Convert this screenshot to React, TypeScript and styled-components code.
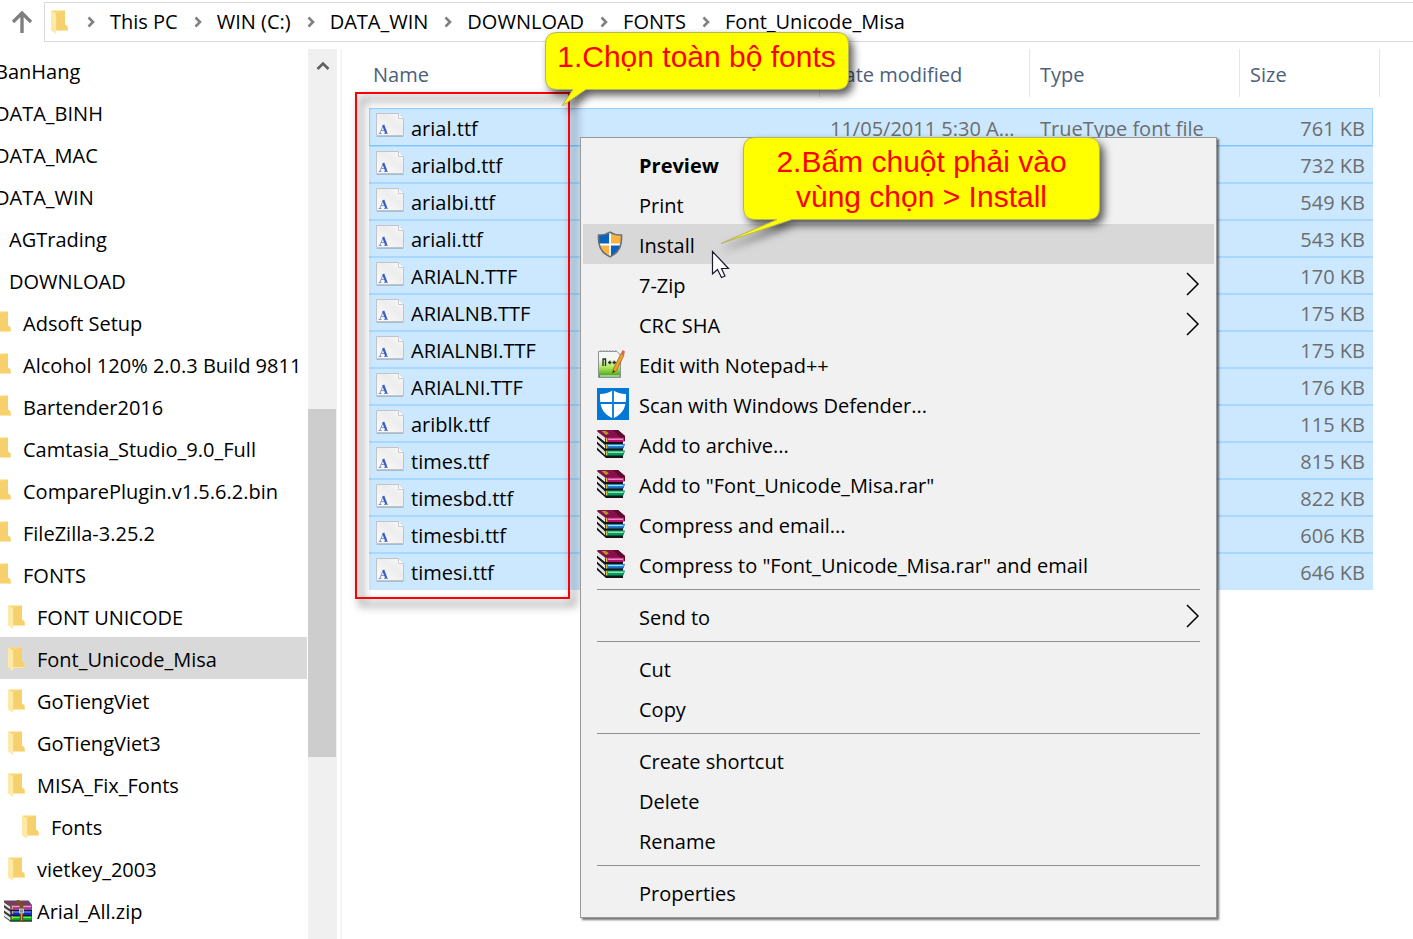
import React from "react";
import styled, { createGlobalStyle, css } from "styled-components";

const GlobalStyle = createGlobalStyle`
  *, *::before, *::after { box-sizing: border-box; }
  body {
    margin: 0;
    background: #fff;
    color: #000;
    font-family: "Open Sans", "Noto Sans", sans-serif;
    font-size: 20px;
    line-height: 28px;
  }
  ul, ol { list-style: none; margin: 0; padding: 0; }
  button { font: inherit; color: inherit; border: 0; background: none; padding: 0; text-align: left; }
  a { color: inherit; text-decoration: none; }
  svg { display: block; flex: none; }
`;

const Window = styled.div`
  position: relative;
  display: flex;
  flex-direction: column;
  min-height: 100vh;
  overflow: hidden;
`;

const AddressRow = styled.header`
  display: flex;
  align-items: center;
  height: 42px;
  padding-top: 1px;
`;

const UpButton = styled.button`
  display: flex;
  justify-content: center;
  width: 44px;
  flex: none;
`;

const AddressBox = styled.nav`
  flex: 1;
  display: flex;
  align-items: center;
  height: 40px;
  padding-left: 6px;
  border: 1px solid #d9d9d9;
  border-right: 0;
`;

const Crumbs = styled.ol`
  display: flex;
  padding-left: 3px;
`;

const Crumb = styled.li`
  display: flex;
  align-items: center;
  white-space: nowrap;
  svg { margin: 0 15px 0 16px; }
`;

const Body = styled.div`
  flex: 1;
  display: flex;
  padding-top: 7px;
`;

const TreePane = styled.nav`
  width: 307px;
  flex: none;
  overflow: hidden;
`;

const TreeItem = styled.li<{ $depth: number; $selected?: boolean }>`
  height: 42px;
  padding-left: ${(p) => p.$depth * 14}px;
  margin-left: -38px;
  background: ${(p) => (p.$selected ? "#d9d9d9" : "transparent")};
`;

const TreeLink = styled.a`
  display: flex;
  align-items: center;
  height: 42px;
  padding-top: 4px;
  white-space: nowrap;
  svg { margin-bottom: 2px; }
`;

const TreeIcon = styled.span<{ $wide?: boolean }>`
  width: 33px;
  flex: none;
  padding-left: ${(p) => (p.$wide ? 0 : 4)}px;
`;

const ScrollTrack = styled.div`
  display: flex;
  flex-direction: column;
  width: 29px;
  flex: none;
  margin-left: 1px;
  background: #f0f0f0;
`;

const ScrollButton = styled.button`
  display: flex;
  align-items: center;
  justify-content: center;
  height: 33px;
`;

const ScrollGap = styled.div<{ $grow: number }>`
  flex: ${(p) => p.$grow} 0 0;
`;

const ScrollThumb = styled.div`
  flex: 348 0 0;
  margin-right: 1px;
  background: #cdcdcd;
`;

const Files = styled.main`
  flex: 1;
  min-width: 0;
  margin-left: 3px;
  padding: 0 40px 0 27px;
  border-left: 2px solid #f5f5f5;
`;

const FileTable = styled.table`
  width: 100%;
  table-layout: fixed;
  border-collapse: separate;
  border-spacing: 0;
`;

const HeadCell = styled.th<{ $width?: number; $first?: boolean; $last?: boolean }>`
  width: ${(p) => (p.$width ? `${p.$width}px` : "auto")};
  height: 59px;
  padding: 0;
  vertical-align: top;
  text-align: left;
  font-weight: 400;
  color: #4c607a;
  > div {
    height: 48px;
    padding: 12px 0 0 ${(p) => (p.$first ? 4 : 10)}px;
    margin-right: ${(p) => (p.$last ? -7 : 0)}px;
    border-right: 1px solid #e5e5e5;
  }
`;

const Cell = styled.td<{ $align?: string }>`
  height: 37px;
  padding: 2px 8px 0 10px;
  line-height: 28px;
  overflow: hidden;
  white-space: nowrap;
  text-overflow: ellipsis;
  text-align: ${(p) => p.$align || "left"};
  color: #6d6d6d;
  background: #cce8ff;
  border: 0 solid #a8d8ff;
  border-width: 1px 0;
`;

const NameCell = styled(Cell)`
  padding: 0 0 0 7px;
  color: #000;
`;

const FileRow = styled.tr<{ $focused?: boolean }>`
  &:last-child td { border-bottom-color: #cce8ff; }
  ${(p) =>
    p.$focused &&
    css`
      td { height: 38px; border-color: #99d1ff; border-bottom-color: #80c4ff; }
      ${Cell}:not(:first-child) { padding-top: 4px; }
      td:first-child { border-left-width: 1px; padding-left: 6px; }
      td:last-child { border-right-width: 1px; padding-right: 7px; }
    `}
`;

const FileName = styled.div`
  display: flex;
  align-items: center;
  gap: 7px;
  span { padding-top: 3px; }
  svg { margin-bottom: 4px; }
`;

const SelectionFrame = styled.div`
  position: absolute;
  left: 355px;
  top: 92px;
  width: 215px;
  height: 507px;
  border: 2px solid #f00;
  filter: drop-shadow(5px 6px 5px rgba(0, 0, 0, 0.85));
  pointer-events: none;
`;

const Menu = styled.div`
  position: absolute;
  left: 580px;
  top: 137px;
  width: 637px;
  padding: 6px 2px 5px;
  background: #f1f1f1;
  border: 1px solid #999;
  box-shadow: 2px 2px 2px rgba(0, 0, 0, 0.55);
`;

const MenuItem = styled.button<{ $bold?: boolean; $active?: boolean }>`
  display: flex;
  align-items: center;
  width: 100%;
  height: 40px;
  padding: 0 14px;
  font-weight: ${(p) => (p.$bold ? 700 : 400)};
  background: ${(p) => (p.$active ? "#d8d8d8" : "transparent")};
`;

const MenuIcon = styled.span`
  width: 42px;
  flex: none;
`;

const MenuLabel = styled.span`
  flex: 1;
  padding-top: 3px;
  white-space: nowrap;
`;

const Separator = styled.hr`
  height: 1px;
  margin: 5px 14px 6px;
  border: 0;
  background: #919191;
`;

const Callout = styled.div<{ $x: number; $y: number; $w: number; $h: number }>`
  position: absolute;
  left: ${(p) => p.$x}px;
  top: ${(p) => p.$y}px;
  width: ${(p) => p.$w}px;
  height: ${(p) => p.$h}px;
  padding-top: 7px;
  text-align: center;
  font-family: "Liberation Sans", Arial, sans-serif;
  font-size: 30px;
  line-height: 35px;
  color: #f00;
  > svg {
    position: absolute;
    left: 0;
    top: 0;
    overflow: visible;
    filter: drop-shadow(4px 5px 4px rgba(0, 0, 0, 0.65));
  }
  > p { position: relative; margin: 0; white-space: nowrap; }
`;

const Pointer = styled.svg`
  position: absolute;
  left: 711px;
  top: 250px;
`;

const FolderIcon = () => (
  <svg width="17" height="24" viewBox="0 0 17 24">
    <path d="M0.5 0.5H14V14.5L16.5 16.5V21H5Z" fill="#f8d775" />
    <path d="M5 3.5L14 0.5V14.5L16.5 16.5V21H5Z" fill="#f5d06c" />
    <path d="M0 0.5L5.2 3.6V24L0 20.6Z" fill="#ffe9a6" />
    <path d="M5 20.5H16.5" stroke="#fbe6ad" />
  </svg>
);

const CrumbArrow = () => (
  <svg width="8" height="12" viewBox="0 0 8 12">
    <path d="M1.5 1.5L6 6L1.5 10.5" fill="none" stroke="#808080" strokeWidth="2.6" />
  </svg>
);

const FontFileIcon = () => (
  <svg width="28" height="24" viewBox="0 0 28 24">
    <defs>
      <linearGradient id="sheet" x1="0" y1="1" x2="1" y2="0">
        <stop offset="0" stopColor="#fdfdfd" />
        <stop offset="0.6" stopColor="#ededed" />
        <stop offset="1" stopColor="#fafafa" />
      </linearGradient>
    </defs>
    <path d="M0.5 0.5H22.5L27.5 5.5V22.5H0.5Z" fill="url(#sheet)" stroke="#c0c4c8" />
    <path d="M22.5 0.5V5.5H27.5" fill="#fff" stroke="#c8ccd0" />
    <path d="M0.5 23.5H27.5" stroke="#a5bdd2" />
    <path d="M2.500 20.5H5.500M8 20.5H12M4 20L7.200 12.5M5.200 17.500H9" fill="none" stroke="#7d97d6" />
    <path d="M7.200 12L10.300 20.2" stroke="#3c60c0" strokeWidth="2.2" />
  </svg>
);

const ShieldIcon = () => (
  <svg width="26" height="27" viewBox="0 0 26 27">
    <defs>
      <clipPath id="uac">
        <path d="M13 1.2C10 3.3 6 4.2 1.5 4C1 14 3 21 13 25.8C23 21 25 14 24.5 4C20 4.2 16 3.3 13 1.2Z" />
      </clipPath>
    </defs>
    <g clipPath="url(#uac)">
      <rect width="13" height="14" fill="#0a63bd" />
      <rect x="13" width="13" height="14" fill="#fdb340" />
      <rect y="14" width="13" height="13" fill="#fdb340" />
      <rect x="13" y="14" width="13" height="13" fill="#0a63bd" />
      <path d="M13 0V27M0 13.5H26" stroke="#fff" strokeWidth="1.8" />
    </g>
    <path
      d="M13 1.2C10 3.3 6 4.2 1.5 4C1 14 3 21 13 25.8C23 21 25 14 24.5 4C20 4.2 16 3.3 13 1.2Z"
      fill="none"
      stroke="#68707a"
      strokeWidth="1.6"
    />
  </svg>
);

const NotepadIcon = () => (
  <svg width="28" height="30" viewBox="0 0 28 30">
    <defs>
      <linearGradient id="npp" x1="0" y1="0" x2="0" y2="1">
        <stop offset="0.3" stopColor="#f4f7f4" />
        <stop offset="0.6" stopColor="#b4e85c" />
        <stop offset="1" stopColor="#2e9c12" />
      </linearGradient>
    </defs>
    <path d="M1.5 2.5H20L23.5 6V28.5H1.5Z" fill="url(#npp)" stroke="#8d9296" />
    <path d="M3 27H22.5" stroke="#f4f4f4" />
    <path d="M3 2H20" stroke="#9aa0a5" strokeWidth="1.500" strokeDasharray="1.5 1.5" />
    <path d="M6 17V9.5M6 10H8.5V17M11 13.5H14.500M12.800 11.8V15.2M15.500 13.5H19M17.200 11.8V15.2" fill="none" stroke="#26332a" strokeWidth="1.4" />
    <path d="M15.5 24L16.5 20L24 4.5L27 6L19.5 21.5Z" fill="#f1a02e" stroke="#9a6416" strokeWidth="0.8" />
    <path d="M24 4.5L25.5 1L28 2.5L27 6Z" fill="#d9645c" />
    <path d="M15.5 24L16.3 21.3L18 22.3Z" fill="#222" />
  </svg>
);

const DefenderIcon = () => (
  <svg width="32" height="32" viewBox="0 0 32 32">
    <rect width="32" height="32" fill="#0078d7" />
    <path d="M16 2C12.5 4.7 8 6 3 6C2.5 18 5 25.5 16 30.5C27 25.5 29.5 18 29 6C24 6 19.5 4.7 16 2Z" fill="#fff" />
    <path d="M16 1V31M2 15H30" stroke="#0078d7" strokeWidth="1.8" />
  </svg>
);

const BooksIcon = () => (
  <svg width="28" height="28" viewBox="0 0 28 28">
    <path d="M0 1L8 8L26 9V28H9L0 20Z" fill="#141414" />
    <path d="M1 0H21L28 6V8H8.5L0 1Z" fill="#86104f" />
    <path d="M21 0L28 6V11L26.500 12V8H24L16 0Z" fill="#5c0a28" />
    <path d="M4.500 1H9L12 3.500L9 5Z" fill="#b0981c" />
    <path d="M0 1.500L8 8V12L0 5.500ZM0 8L8 15V18.500L0 11.500ZM0 14L8 21.500V25L0 17.500Z" fill="#fafafa" />
    <path d="M0 3.500L8 10M0 9.500L8 16.700M0 15.500L8 23" stroke="#bdbdbd" strokeWidth="0.7" />
    <path d="M8.500 7.500H27L26 12H9.500Z" fill="#b01272" />
    <path d="M11 9.200H26" stroke="#f09aca" strokeWidth="1.400" />
    <path d="M8.500 14H28L26.500 18.500H9.500Z" fill="#1670c0" />
    <path d="M11 15.500H26.500" stroke="#a0dafc" strokeWidth="1.400" />
    <path d="M8.500 20.500H28L26.500 25.500H9.500Z" fill="#0b9a5e" />
    <path d="M11 22.200H26.500" stroke="#90efc5" strokeWidth="1.400" />
    <path d="M9.5 8V12M9.5 14.500V18.500M9.5 21V25.5" stroke="#e6c534" strokeWidth="1.500" />
  </svg>
);

const ZipIcon = () => (
  <svg width="28" height="22" viewBox="0 0 28 22">
    <path d="M0 1L7 6V22L0 17Z" fill="#3a3a3a" />
    <path d="M0 0.5H24.5L28 5V7H6.5L0 2Z" fill="#6f4060" />
    <path d="M0 2.5L6.5 7V9.5L0 5ZM0 7.5L6.5 12V15L0 10.5ZM0 13L6.5 17.5V20.5L0 16Z" fill="#e9e9e9" />
    <path d="M6.5 5H28V10.5H6.5Z" fill="#a13b8c" />
    <path d="M8 6.5H27" stroke="#e59ad6" strokeWidth="1.3" />
    <path d="M6.5 10.5H28V16H6.5Z" fill="#1426c8" />
    <path d="M8 12H27" stroke="#5da0f5" strokeWidth="1.2" />
    <path d="M6.5 16H28V21.5H6.5Z" fill="#0ea321" />
    <path d="M8 17.5H27" stroke="#65ef6c" strokeWidth="1.2" />
    <path d="M6.5 10.5H28M6.5 15.5H28M6.5 21H28" stroke="#1d1230" />
    <path d="M8.5 6V20" stroke="#d4b83a" strokeDasharray="3 2" />
    <path d="M13 0.5L17.5 5V21.5" fill="none" stroke="#7a5219" strokeWidth="3.5" />
    <path d="M15.5 9H19.5V13H15.5Z" fill="#8c8c8c" stroke="#e1e1e1" strokeWidth="0.8" />
    <path d="M17.5 13V20" stroke="#d3a544" />
  </svg>
);

const SubmenuArrow = () => (
  <svg width="14" height="24" viewBox="0 0 14 24">
    <path d="M1 1L12 12L1 23" fill="none" stroke="#000" strokeWidth="1.5" />
  </svg>
);

type Node = { name: string; depth: number; kind?: "folder" | "zip"; selected?: boolean };

const tree: Node[] = [
  { name: "BanHang", depth: 0 },
  { name: "DATA_BINH", depth: 0 },
  { name: "DATA_MAC", depth: 0 },
  { name: "DATA_WIN", depth: 0 },
  { name: "AGTrading", depth: 1 },
  { name: "DOWNLOAD", depth: 1 },
  { name: "Adsoft Setup", depth: 2 },
  { name: "Alcohol 120% 2.0.3 Build 9811", depth: 2 },
  { name: "Bartender2016", depth: 2 },
  { name: "Camtasia_Studio_9.0_Full", depth: 2 },
  { name: "ComparePlugin.v1.5.6.2.bin", depth: 2 },
  { name: "FileZilla-3.25.2", depth: 2 },
  { name: "FONTS", depth: 2 },
  { name: "FONT UNICODE", depth: 3 },
  { name: "Font_Unicode_Misa", depth: 3, selected: true },
  { name: "GoTiengViet", depth: 3 },
  { name: "GoTiengViet3", depth: 3 },
  { name: "MISA_Fix_Fonts", depth: 3 },
  { name: "Fonts", depth: 4 },
  { name: "vietkey_2003", depth: 3 },
  { name: "Arial_All.zip", depth: 3, kind: "zip" },
];

const crumbs = ["This PC", "WIN (C:)", "DATA_WIN", "DOWNLOAD", "FONTS", "Font_Unicode_Misa"];

const files: { name: string; size: string; date?: string; type?: string }[] = [
  { name: "arial.ttf", size: "761 KB", date: "11/05/2011 5:30 A...", type: "TrueType font file" },
  { name: "arialbd.ttf", size: "732 KB" },
  { name: "arialbi.ttf", size: "549 KB" },
  { name: "ariali.ttf", size: "543 KB" },
  { name: "ARIALN.TTF", size: "170 KB" },
  { name: "ARIALNB.TTF", size: "175 KB" },
  { name: "ARIALNBI.TTF", size: "175 KB" },
  { name: "ARIALNI.TTF", size: "176 KB" },
  { name: "ariblk.ttf", size: "115 KB" },
  { name: "times.ttf", size: "815 KB" },
  { name: "timesbd.ttf", size: "822 KB" },
  { name: "timesbi.ttf", size: "606 KB" },
  { name: "timesi.ttf", size: "646 KB" },
];

type Entry = { label: string; icon?: React.ReactNode; bold?: boolean; active?: boolean; submenu?: boolean };

const menuGroups: Entry[][] = [
  [
    { label: "Preview", bold: true },
    { label: "Print" },
    { label: "Install", icon: <ShieldIcon />, active: true },
    { label: "7-Zip", submenu: true },
    { label: "CRC SHA", submenu: true },
    { label: "Edit with Notepad++", icon: <NotepadIcon /> },
    { label: "Scan with Windows Defender...", icon: <DefenderIcon /> },
    { label: "Add to archive...", icon: <BooksIcon /> },
    { label: 'Add to "Font_Unicode_Misa.rar"', icon: <BooksIcon /> },
    { label: "Compress and email...", icon: <BooksIcon /> },
    { label: 'Compress to "Font_Unicode_Misa.rar" and email', icon: <BooksIcon /> },
  ],
  [{ label: "Send to", submenu: true }],
  [{ label: "Cut" }, { label: "Copy" }],
  [{ label: "Create shortcut" }, { label: "Delete" }, { label: "Rename" }],
  [{ label: "Properties" }],
];

export default function App() {
  return (
    <>
      <GlobalStyle />
      <Window>
        <AddressRow>
          <UpButton aria-label="Up">
            <svg width="22" height="22" viewBox="0 0 22 22">
              <path d="M11 22V2M2 11L11 2L20 11" fill="none" stroke="#808080" strokeWidth="3.4" />
            </svg>
          </UpButton>
          <AddressBox>
            <FolderIcon />
            <Crumbs>
              {crumbs.map((c) => (
                <Crumb key={c}>
                  <CrumbArrow />
                  <a href="#">{c}</a>
                </Crumb>
              ))}
            </Crumbs>
          </AddressBox>
        </AddressRow>
        <Body>
          <TreePane>
            <ul>
              {tree.map((n) => (
                <TreeItem key={n.name} $depth={n.depth} $selected={n.selected}>
                  <TreeLink href="#">
                    <TreeIcon $wide={n.kind === "zip"}>{n.kind === "zip" ? <ZipIcon /> : n.depth > 1 && <FolderIcon />}</TreeIcon>
                    {n.name}
                  </TreeLink>
                </TreeItem>
              ))}
            </ul>
          </TreePane>
          <ScrollTrack>
            <ScrollButton aria-label="Scroll up">
              <svg width="14" height="10" viewBox="0 0 14 10">
                <path d="M1.5 8L7 2.5L12.5 8" fill="none" stroke="#606060" strokeWidth="2.6" />
              </svg>
            </ScrollButton>
            <ScrollGap $grow={327} />
            <ScrollThumb />
            <ScrollGap $grow={182} />
          </ScrollTrack>
          <Files>
            <FileTable>
              <thead>
                <tr>
                  <HeadCell $first><div>Name</div></HeadCell>
                  <HeadCell $width={210}><div>Date modified</div></HeadCell>
                  <HeadCell $width={210}><div>Type</div></HeadCell>
                  <HeadCell $width={133} $last><div>Size</div></HeadCell>
                </tr>
              </thead>
              <tbody>
                {files.map((f, i) => (
                  <FileRow key={f.name} $focused={i === 0}>
                    <NameCell>
                      <FileName>
                        <FontFileIcon />
                        <span>{f.name}</span>
                      </FileName>
                    </NameCell>
                    <Cell>{f.date}</Cell>
                    <Cell>{f.type}</Cell>
                    <Cell $align="right">{f.size}</Cell>
                  </FileRow>
                ))}
              </tbody>
            </FileTable>
          </Files>
        </Body>

        <SelectionFrame />

        <Menu>
          {menuGroups.map((group, g) => (
            <React.Fragment key={g}>
              {g > 0 && <Separator />}
              {group.map((e) => (
                <MenuItem key={e.label} $bold={e.bold} $active={e.active}>
                  <MenuIcon>{e.icon}</MenuIcon>
                  <MenuLabel>{e.label}</MenuLabel>
                  {e.submenu && <SubmenuArrow />}
                </MenuItem>
              ))}
            </React.Fragment>
          ))}
        </Menu>

        <Callout $x={545} $y={32} $w={303} $h={58}>
          <svg width="303" height="58" viewBox="0 0 303 58">
            <path
              d="M12 0.5H292Q303.5 0.5 303.5 12V46Q303.5 57.5 292 57.5H41L17 74L28 57.5H12Q0.5 57.5 0.5 46V12Q0.5 0.5 12 0.5Z"
              fill="#ff0"
              stroke="#b5b55a"
            />
          </svg>
          <p>1.Chọn toàn bộ fonts</p>
        </Callout>

        <Callout $x={743} $y={137} $w={357} $h={83}>
          <svg width="357" height="83" viewBox="0 0 357 83">
            <path
              d="M12 0.5H345Q356.5 0.5 356.5 12V71Q356.5 82.5 345 82.5H49L-22 106.5L34 82.5H12Q0.5 82.5 0.5 71V12Q0.5 0.5 12 0.5Z"
              fill="#ff0"
              stroke="#b5b55a"
            />
          </svg>
          <p>
            2.Bấm chuột phải vào
            <br />
            vùng chọn &gt; Install
          </p>
        </Callout>

        <Pointer width="19" height="29" viewBox="0 0 19 29">
          <path d="M1.5 1.5V24L6.5 19.5L10.5 27.5L14 26L10.5 18.5H17.5Z" fill="#fff" stroke="#1a1a2e" strokeWidth="1.2" />
        </Pointer>
      </Window>
    </>
  );
}
